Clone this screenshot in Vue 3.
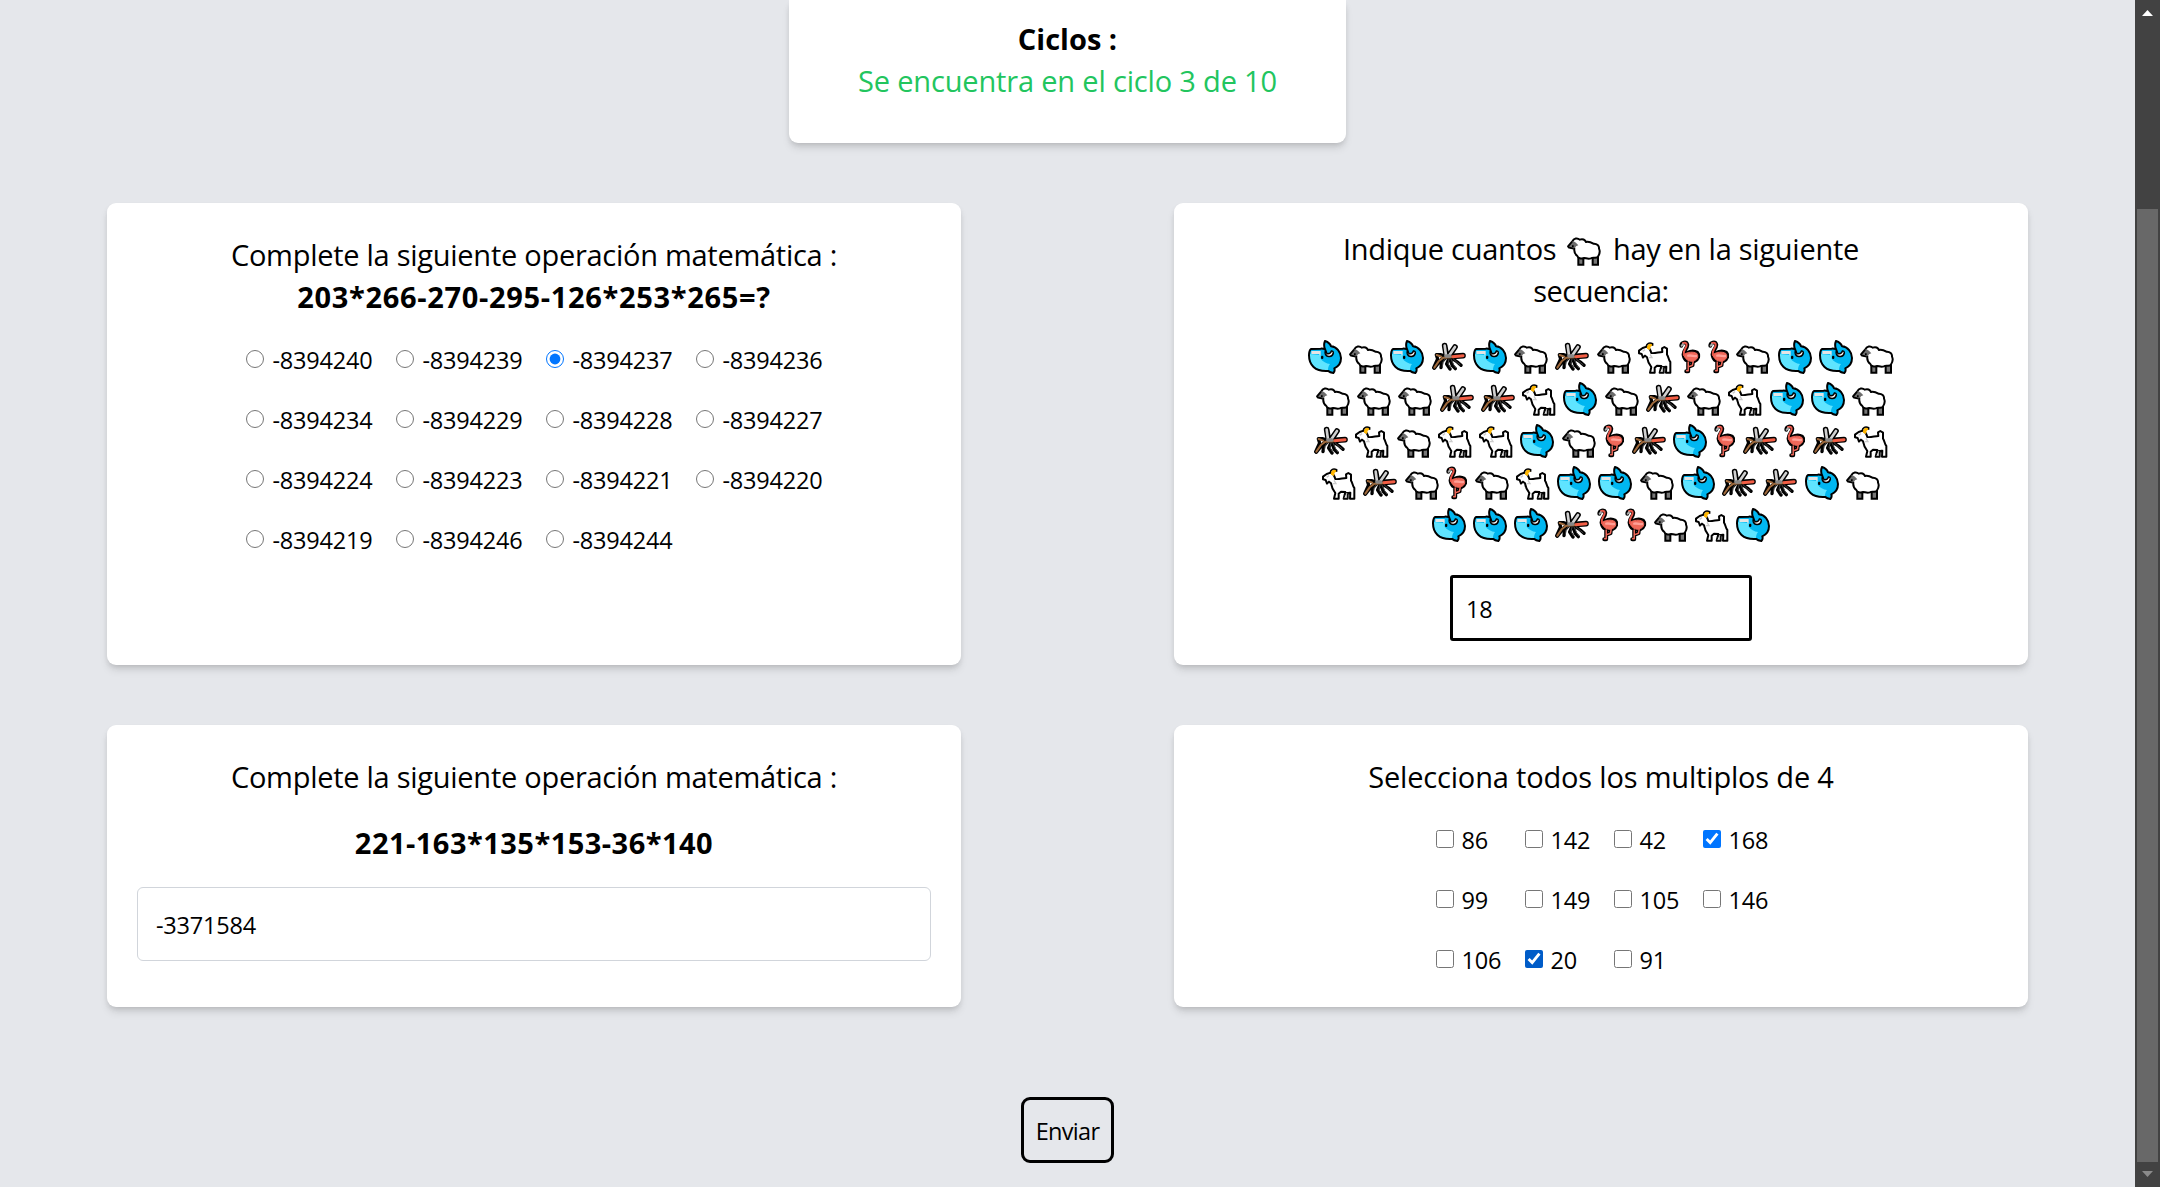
<script setup>
import { ref } from 'vue'

const operations = [
  '-8394240', '-8394239', '-8394237', '-8394236',
  '-8394234', '-8394229', '-8394228', '-8394227',
  '-8394224', '-8394223', '-8394221', '-8394220',
  '-8394219', '-8394246', '-8394244',
]
const numbers = ['86', '142', '42', '168', '99', '149', '105', '146', '106', '20', '91']
const picked = ref('-8394237')
const checked = ref(['168', '20'])
const count = ref('18')
const result = ref('-3371584')

// w: whale, s: sheep, m: mosquito, g: goat, f: flamingo
const names = { w: 'whale', s: 'sheep', m: 'mosquito', g: 'goat', f: 'flamingo' }
const rows = [
  'wswmwsmsgffswws',
  'sssmmgwsmsgwws',
  'mgsggwsfmwfmfmg',
  'gmsfsgwwswmmws',
  'wwwmffsgw',
]
</script>

<template>
  <div class="page">
    <svg class="defs" aria-hidden="true">
      <symbol id="whale" viewBox="0 0 102 102">
        <path d="M51 3C60 6 67 12 69 19C86 20 99 36 99 54C99 68 92 79 79 85C81 91 79 96 76 99C69 98 64 96 61 93C20 96 3 74 3 46C3 36 5 30 9 27L38 26C44 25 48 27 51 28C47 18 48 10 51 3Z" fill="#00b7f1" />
        <path d="M5 42L38 45V56C44 65 55 70 66 72C61 78 60 85 60 91C24 94 5 74 5 42Z" fill="#5fe4ff" />
        <path d="M10 33H38V46H34V42H10Z" fill="#e4e4e4" />
        <path d="M51 3C60 6 67 12 69 19C86 20 99 36 99 54C99 68 92 79 79 85C81 91 79 96 76 99C69 98 64 96 61 93C20 96 3 74 3 46C3 36 5 30 9 27L38 26C44 25 48 27 51 28C47 18 48 10 51 3Z" fill="none" stroke="#000" stroke-width="6" stroke-linejoin="round" />
        <path d="M52 28C53 32 50 36 52 42C56 53 73 52 76 39C76 34 73 32 70 33C69 39 65 42 57 41Z" fill="#fff" stroke="#000" stroke-width="4.5" stroke-linejoin="round" />
        <rect x="39" y="47" width="7" height="10" rx="3" />
      </symbol>
      <symbol id="sheep" viewBox="0 0 102 102">
        <path d="M34 74H49V98H34ZM77 72H93V98H77Z" fill="#777" stroke="#000" stroke-width="6" />
        <path d="M16 28C20 18 32 17 38 23C47 19 54 23 57 30C67 28 74 32 79 35C90 34 97 42 96 50C100 58 97 68 92 75C86 80 78 74 72 79C62 82 57 78 52 78C42 82 33 78 31 72C24 67 21 58 22 50Z" fill="#fff" stroke="#000" stroke-width="6" stroke-linejoin="round" />
        <path d="M3 43L15 29C23 27 29 34 34 40L27 43C24 51 15 51 7 47Z" fill="#6d6d6d" />
        <path d="M15 29L3 43L6 47L20 50" fill="none" stroke="#000" stroke-width="5.5" stroke-linejoin="round" />
        <path d="M15 40H20V45H15Z" />
      </symbol>
      <symbol id="goat" viewBox="0 0 102 102">
        <path d="M3 32L14 24L26 20C34 22 38 31 40 39C50 41 63 36 73 36L72 25L79 21L87 26V44C92 50 91 59 97 66V98H84L85 80L77 84V98H65L70 78L57 77L50 83V98H36L40 81C34 73 29 65 27 52L21 47L15 53L11 42L3 40Z" fill="#fff" stroke="#000" stroke-width="6" stroke-linejoin="round" />
        <path d="M72 80L65 97H76V83L83 79Z" fill="#ddd" stroke="#000" stroke-width="3" />
        <path d="M27 26C26 14 34 7 44 12V18C38 17 37 22 36 30Z" fill="#ffb600" />
        <path d="M24 21C26 10 34 6 44 11V17" fill="none" stroke="#000" stroke-width="4.5" />
        <path d="M14 34L21 29M36 43L42 53L32 53" fill="none" stroke="#ccc" stroke-width="4" />
      </symbol>
      <symbol id="mosquito" viewBox="0 0 102 102">
        <g fill="none" stroke-linecap="round" stroke-linejoin="round">
          <path d="M43 46L38 17M52 46L69 21" stroke="#000" stroke-width="17" />
          <path d="M52 50L93 47" stroke="#000" stroke-width="17" />
          <path d="M41 52L29 66L27 83M51 55L44 72L54 87M54 56L61 77L70 86M60 55L76 66L87 76M42 49L25 44L13 44L17 57L5 83M31 55L7 85" stroke="#000" stroke-width="10" />
          <path d="M40 56L33 66L31 81M51 57L48 71L56 84M57 57L65 74L72 84M64 57L76 68L84 74" stroke="#444" stroke-width="3" />
          <path d="M42 46L38 17M52 46L69 21" stroke="#d0d0d0" stroke-width="8" />
          <path d="M61 50L93 47" stroke="#f35e45" stroke-width="9" />
          <path d="M58 52L34 53L20 64L7 83M28 50L14 45" stroke="#a16b3d" stroke-width="6" />
          <path d="M42 48H53" stroke="#888" stroke-width="11" />
        </g>
      </symbol>
      <symbol id="flamingo" viewBox="0 0 65 102">
        <g fill="none" stroke-linecap="round" stroke-linejoin="round">
          <path d="M7 17C7 6 22 3 25 13C27 24 12 32 14 44C16 62 30 67 46 64C59 58 62 46 55 38C46 32 32 35 24 39M28 67V94H22M42 66L41 76L28 81" stroke="#000" stroke-width="12" />
          <path d="M17 42C27 36 43 34 54 40C61 50 55 60 42 64C27 65 17 56 14 43Z" fill="#f0695a" stroke="#f0695a" stroke-width="3" />
          <path d="M12 9C19 5 25 10 23 17C20 27 11 32 15 45" stroke="#e85548" stroke-width="6" />
          <path d="M28 66V93H23M43 65L41 76L28 81" stroke="#f0695a" stroke-width="4.5" />
          <path d="M28 47C37 45 46 49 52 48" stroke="#ffa097" stroke-width="7" />
          <path d="M8 17L12 12" stroke="#aaa" stroke-width="6" />
        </g>
      </symbol>
    </svg>

    <main class="content">
      <section class="card cycles">
        <h2 class="title bold">Ciclos :</h2>
        <p class="title cycle">Se encuentra en el ciclo 3 de 10</p>
      </section>

      <div class="row first">
        <section class="card">
          <p class="title prompt">Complete la siguiente operación matemática :</p>
          <p class="title bold formula">203*266-270-295-126*253*265=?</p>
          <div class="options radios">
            <label v-for="o in operations" :key="o" class="option">
              <input v-model="picked" type="radio" name="operation" :value="o"><span>{{ o }}</span>
            </label>
          </div>
        </section>

        <section class="card counting">
          <p class="title prompt"><span>Indique cuantos</span><svg class="inline-icon"><use href="#sheep" /></svg><span>hay en la siguiente</span></p>
          <p class="title sequence">secuencia:</p>
          <div class="animals">
            <div v-for="(row, r) in rows" :key="r" class="animal-row">
              <svg v-for="(a, i) in row" :key="i" class="animal" :class="names[a]"><use :href="'#' + names[a]" /></svg>
            </div>
          </div>
          <input v-model="count" class="count" type="text">
        </section>
      </div>

      <div class="row second">
        <section class="card">
          <p class="title prompt">Complete la siguiente operación matemática :</p>
          <p class="title bold formula-short">221-163*135*153-36*140</p>
          <input v-model="result" class="result" type="text">
        </section>

        <section class="card">
          <p class="title multiples">Selecciona todos los multiplos de 4</p>
          <div class="options checks">
            <label v-for="n in numbers" :key="n" class="option" :class="{ hovered: n === '20' }">
              <input v-model="checked" type="checkbox" :value="n"><span>{{ n }}</span>
            </label>
          </div>
        </section>
      </div>

      <button class="send" type="button">Enviar</button>
    </main>

    <aside class="scrollbar">
      <svg class="arrow" viewBox="0 0 11 6"><path d="M5.5 0L11 6H0Z" fill="#fff" /></svg>
      <div class="thumb"></div>
      <svg class="arrow" viewBox="0 0 11 6"><path d="M0 0H11L5.5 6Z" fill="#8b8b8b" /></svg>
    </aside>
  </div>
</template>

<style>
body {
  margin: 0;
  background: #e5e7eb;
  overflow: hidden;
}
</style>

<style scoped>
.page {
  display: flex;
  width: 2160px;
  height: 1187px;
  overflow: hidden;
  background: #e5e7eb;
  color: #000;
  font-family: "Open Sans", "Noto Sans", sans-serif;
  font-size: 23.5px;
  letter-spacing: -.2px;
}
.page * { box-sizing: border-box; }
.defs { position: absolute; width: 0; height: 0; }
.content {
  width: 2135px;
  display: flex;
  flex-direction: column;
  align-items: center;
}
.card {
  width: 854px;
  padding: 31px 30px 0;
  border-radius: 9px;
  background: #fff;
  box-shadow: 0 6px 9px -1.5px rgba(0, 0, 0, .1), 0 3px 6px -3px rgba(0, 0, 0, .1), 0 3px 6px -1px rgba(0, 0, 0, .06);
}
.cycles {
  flex: none;
  width: 557px;
  height: 143px;
  padding-top: 18px;
  border-radius: 0 0 9px 9px;
}
.row {
  flex: none;
  width: 100%;
  display: flex;
  justify-content: space-between;
  padding: 0 107px;
}
.first { margin-top: 60px; height: 462px; }
.second { margin-top: 60px; height: 282px; }
.title {
  margin: 0;
  height: 42px;
  display: flex;
  justify-content: center;
  align-items: center;
  line-height: 42px;
  font-size: 29px;
  font-weight: 400;
  letter-spacing: 0;
  white-space: nowrap;
}
.bold { font-weight: 700; }
.cycle { color: #22c55e; letter-spacing: -.17px; }
.prompt { letter-spacing: -.27px; }
.formula { letter-spacing: .67px; }
.formula-short { margin-top: 24px; letter-spacing: .47px; }
.sequence { letter-spacing: -.55px; }
.multiples { letter-spacing: -.18px; }
.options { display: grid; justify-content: center; row-gap: 24px; }
.radios { grid-template-columns: repeat(4, 150px); margin-top: 23px; padding-left: 23px; }
.checks { grid-template-columns: repeat(4, 89px); margin-top: 23px; padding-left: 25px; }
.option { display: flex; align-items: center; height: 36px; line-height: 36px; }
.option input { flex: none; width: 18px; height: 18px; margin: 0 8px 0 0; }
.option span { padding-top: 2px; }
.radios span { padding-left: 1px; }
.hovered input { accent-color: #005cc8; }
.counting { padding-top: 25px; display: flex; flex-direction: column; align-items: center; }
.inline-icon { width: 34px; height: 34px; margin: 0 11.5px 0 11px; }
.animals { margin-top: 24px; }
.animal-row { display: flex; justify-content: center; align-items: center; gap: 7.25px; height: 42px; }
.animal { width: 34px; height: 34px; }
.flamingo { width: 21.4px; }
input[type="text"] { font: inherit; letter-spacing: inherit; color: inherit; background: #fff; outline: none; }
.count {
  width: 302px;
  height: 66px;
  margin-top: 29px;
  padding: 2px 13px 0;
  border: 3px solid #000;
  border-radius: 3px;
}
.result {
  display: block;
  width: 794px;
  height: 74px;
  margin-top: 23px;
  padding: 2px 18px 0;
  border: 1px solid #d1d5db;
  border-radius: 6px;
}
.send {
  flex: none;
  width: 93px;
  height: 66px;
  margin-top: 90px;
  padding: 2px 0 0;
  border: 3px solid #000;
  border-radius: 9px;
  background: transparent;
  color: inherit;
  font: inherit;
  letter-spacing: -.7px;
}
.scrollbar {
  width: 25px;
  display: flex;
  flex-direction: column;
  align-items: center;
  padding: 10px 0;
  background: #424242;
}
.arrow { width: 11px; height: 6px; flex: none; }
.thumb { width: 21px; height: 953px; margin: 193px 0 9px; background: #686868; }
</style>
